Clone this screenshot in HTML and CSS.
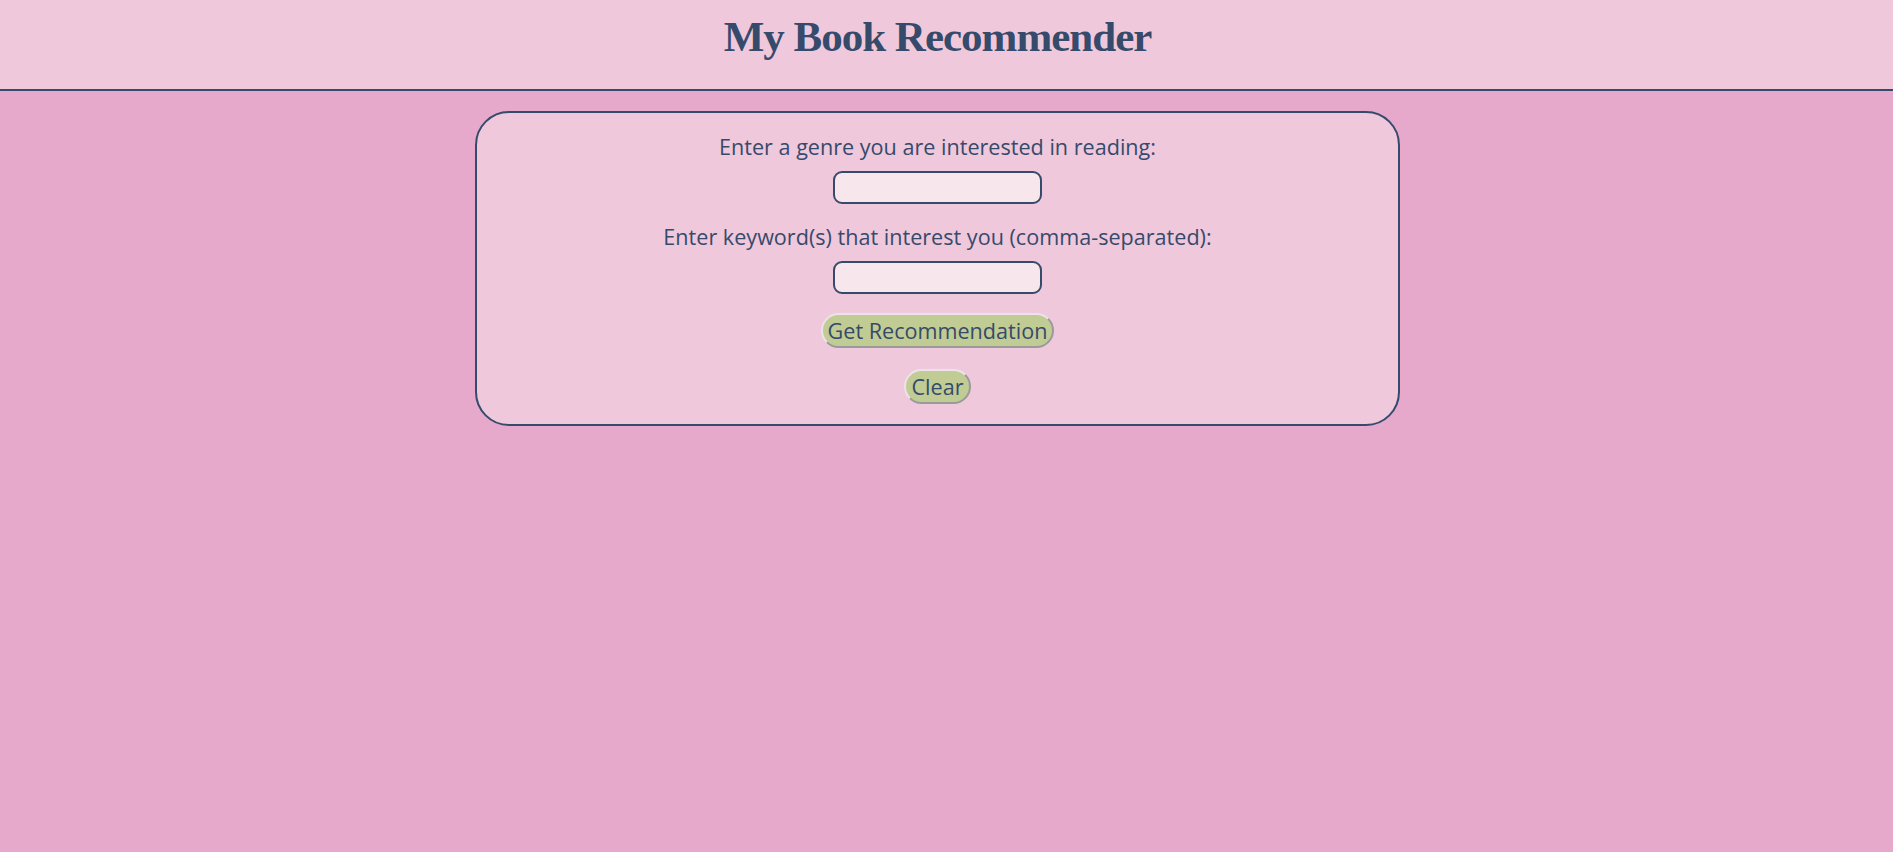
FILE: index.html
```html
<!DOCTYPE html>
<html lang="en">
<head>
<meta charset="utf-8">
<title>My Book Recommender</title>
<link rel="stylesheet" href="styles.css">
</head>
<body>
<header class="site-header">
  <h1 class="site-title">My Book Recommender</h1>
</header>
<main class="page">
  <form class="card">
    <label class="field-label" for="genre">Enter a genre you are interested in reading:</label>
    <input class="field-input" type="text" id="genre">
    <label class="field-label field-label--second" for="keywords">Enter keyword(s) that interest you (comma-separated):</label>
    <input class="field-input" type="text" id="keywords">
    <button class="btn btn--primary" type="button">Get Recommendation</button>
    <button class="btn btn--clear" type="button">Clear</button>
  </form>
</main>
</body>
</html>
```

FILE: styles.css
```css
html, body {
  margin: 0;
  padding: 0;
}

body {
  background: #e6a9cc;
  color: #364a6b;
  font-family: "Open Sans", "Noto Sans", sans-serif;
  min-height: 852px;
}

.site-header {
  background: #efc8dc;
  border-bottom: 2px solid #364a6b;
  height: 89px;
  padding-right: 18px;
  box-sizing: content-box;
}

.site-title {
  margin: 0;
  padding-top: 11px;
  font-family: "Liberation Serif", "Times New Roman", serif;
  font-weight: 700;
  font-size: 43px;
  letter-spacing: -1px;
  line-height: 52px;
  text-align: center;
  color: #364a6b;
}

.page {
  padding-right: 18px;
  padding-top: 20px;
}

.card {
  box-sizing: border-box;
  width: 925px;
  margin: 0 auto;
  background: #efc8dc;
  border: 2px solid #364a6b;
  border-radius: 34px;
  padding: 20px 0 20px;
  display: flex;
  flex-direction: column;
  align-items: center;
}

.field-label {
  font-size: 21.6px;
  line-height: 28px;
  display: block;
}

.field-label--second {
  margin-top: 19px;
}

.field-input {
  box-sizing: border-box;
  width: 209px;
  height: 33px;
  margin-top: 10px;
  background: #f7e6eb;
  border: 2px solid #364a6b;
  border-radius: 9px;
  outline: none;
  font: inherit;
  padding: 0 6px;
}

.btn {
  box-sizing: border-box;
  height: 35px;
  padding: 0 5px;
  white-space: nowrap;
  font-family: inherit;
  font-size: 21.6px;
  line-height: 28px;
  color: #364a6b;
  background: #c0cc94;
  border: 2px solid;
  border-color: #ebe3e8 #9a9a9a #9a9a9a #ebe3e8;
  border-radius: 18px;
  cursor: pointer;
}

.btn--primary {
  margin-top: 19px;
}

.btn--clear {
  margin-top: 21px;
}
```
